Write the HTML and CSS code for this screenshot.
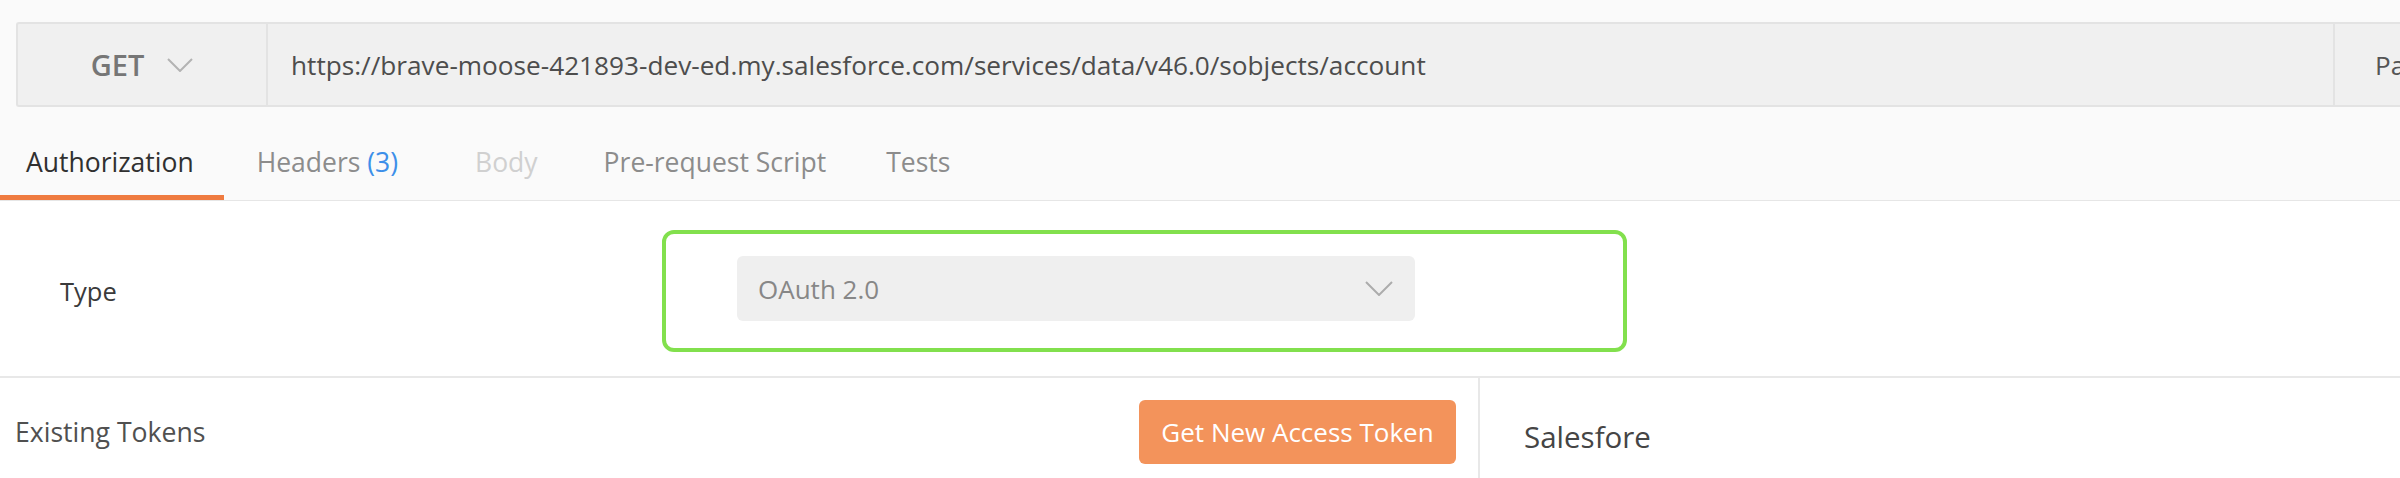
FILE: index.html
```html
<!DOCTYPE html>
<html lang="en">
<head>
<meta charset="utf-8">
<title>Request</title>
<link rel="stylesheet" href="styles.css">
</head>
<body>
<div class="app">
  <div class="request-bar">
    <div class="url-bar">
      <div class="method">
        <span>GET</span>
        <svg class="chev" width="26" height="14" viewBox="0 0 26 14"><polyline points="1,1 13,13 25,1" fill="none" stroke="#b3b3b3" stroke-width="2"/></svg>
      </div>
      <div class="url">https://brave-moose-421893-dev-ed.my.salesforce.com/services/data/v46.0/sobjects/account</div>
      <div class="params">Params</div>
    </div>
  </div>
  <nav class="tabs">
    <div class="tab active">Authorization</div>
    <div class="tab">Headers&nbsp;<span class="count">(3)</span></div>
    <div class="tab disabled">Body</div>
    <div class="tab script">Pre-request Script</div>
    <div class="tab">Tests</div>
  </nav>
  <section class="auth-type">
    <div class="label">Type</div>
    <div class="highlight">
      <div class="select">
        <span>OAuth 2.0</span>
        <svg class="chev" width="28" height="15" viewBox="0 0 28 15"><polyline points="1,1 14,14 27,1" fill="none" stroke="#acacac" stroke-width="2"/></svg>
      </div>
    </div>
  </section>
  <section class="tokens">
    <div class="tokens-left">
      <span class="tokens-title">Existing Tokens</span>
      <button class="btn-token">Get New Access Token</button>
    </div>
    <div class="tokens-right">
      <div class="provider">Salesfore</div>
    </div>
  </section>
</div>
</body>
</html>
```

FILE: styles.css
```css
html, body {
  margin: 0;
  padding: 0;
}
body {
  background: #ffffff;
  font-family: "Open Sans", "DejaVu Sans", sans-serif;
  overflow: hidden;
  width: 2400px;
  height: 478px;
}
.request-bar {
  background: #fafafa;
  padding: 22px 0 0 16px;
}
.url-bar {
  display: flex;
  height: 85px;
  box-sizing: border-box;
  border: 2px solid #e3e3e3;
  border-right: none;
  border-radius: 3px 0 0 3px;
  background: #f0f0f0;
}
.method {
  width: 250px;
  box-sizing: border-box;
  border-right: 2px solid #e3e3e3;
  display: flex;
  align-items: center;
  justify-content: center;
  gap: 23px;
  font-size: 29px;
  font-weight: 600;
  color: #767676;
}
.url {
  flex: 1;
  display: flex;
  align-items: center;
  padding-left: 23px;
  font-size: 26.2px;
  color: #4d4d4d;
  white-space: nowrap;
}
.params {
  width: 67px;
  box-sizing: border-box;
  border-left: 2px solid #e3e3e3;
  padding-left: 40px;
  display: flex;
  align-items: center;
  overflow: hidden;
  white-space: nowrap;
  font-size: 26px;
  color: #555555;
}
.tabs {
  display: flex;
  height: 94px;
  box-sizing: border-box;
  background: #fafafa;
  border-bottom: 1px solid #e6e6e6;
}
.tab {
  display: flex;
  align-items: center;
  padding: 22px 33px 0;
  border-bottom: 5px solid transparent;
  font-size: 26.5px;
  color: #8c8c8c;
  white-space: nowrap;
}
.tab.active {
  padding-left: 26px;
  padding-right: 30px;
  color: #303030;
  border-bottom-color: #ef7b40;
}
.tab.disabled {
  color: #d0d0d0;
  padding-left: 44px;
}
.tab.script {
  padding-right: 27px;
}
.count {
  color: #3d8fe9;
}
.auth-type {
  display: flex;
  align-items: center;
  padding: 29px 0 24px 60px;
  border-bottom: 2px solid #e8e8e8;
}
.label {
  width: 602px;
  font-size: 25.5px;
  color: #3a3a3a;
}
.highlight {
  width: 965px;
  height: 122px;
  box-sizing: border-box;
  border: 4px solid #82e04d;
  border-radius: 12px;
  padding: 22px 0 0 71px;
}
.select {
  width: 678px;
  height: 65px;
  box-sizing: border-box;
  background: #efefef;
  border-radius: 6px;
  display: flex;
  align-items: center;
  justify-content: space-between;
  padding: 0 22px 0 21px;
  font-size: 26px;
  color: #878787;
}
.tokens {
  display: flex;
  height: 100px;
}
.tokens-left {
  width: 1480px;
  box-sizing: border-box;
  border-right: 2px solid #e8e8e8;
  display: flex;
  justify-content: space-between;
  align-items: flex-start;
  padding: 22px 22px 0 15px;
}
.tokens-title {
  line-height: 64px;
  font-size: 26.6px;
  color: #505050;
}
.btn-token {
  width: 317px;
  height: 64px;
  border: none;
  border-radius: 6px;
  background: #f3935b;
  color: #ffffff;
  font-family: "Open Sans", "DejaVu Sans", sans-serif;
  font-size: 26px;
  padding: 0;
}
.tokens-right {
  flex: 1;
  padding: 38px 0 0 44px;
}
.provider {
  font-size: 29.5px;
  color: #454545;
}
```
